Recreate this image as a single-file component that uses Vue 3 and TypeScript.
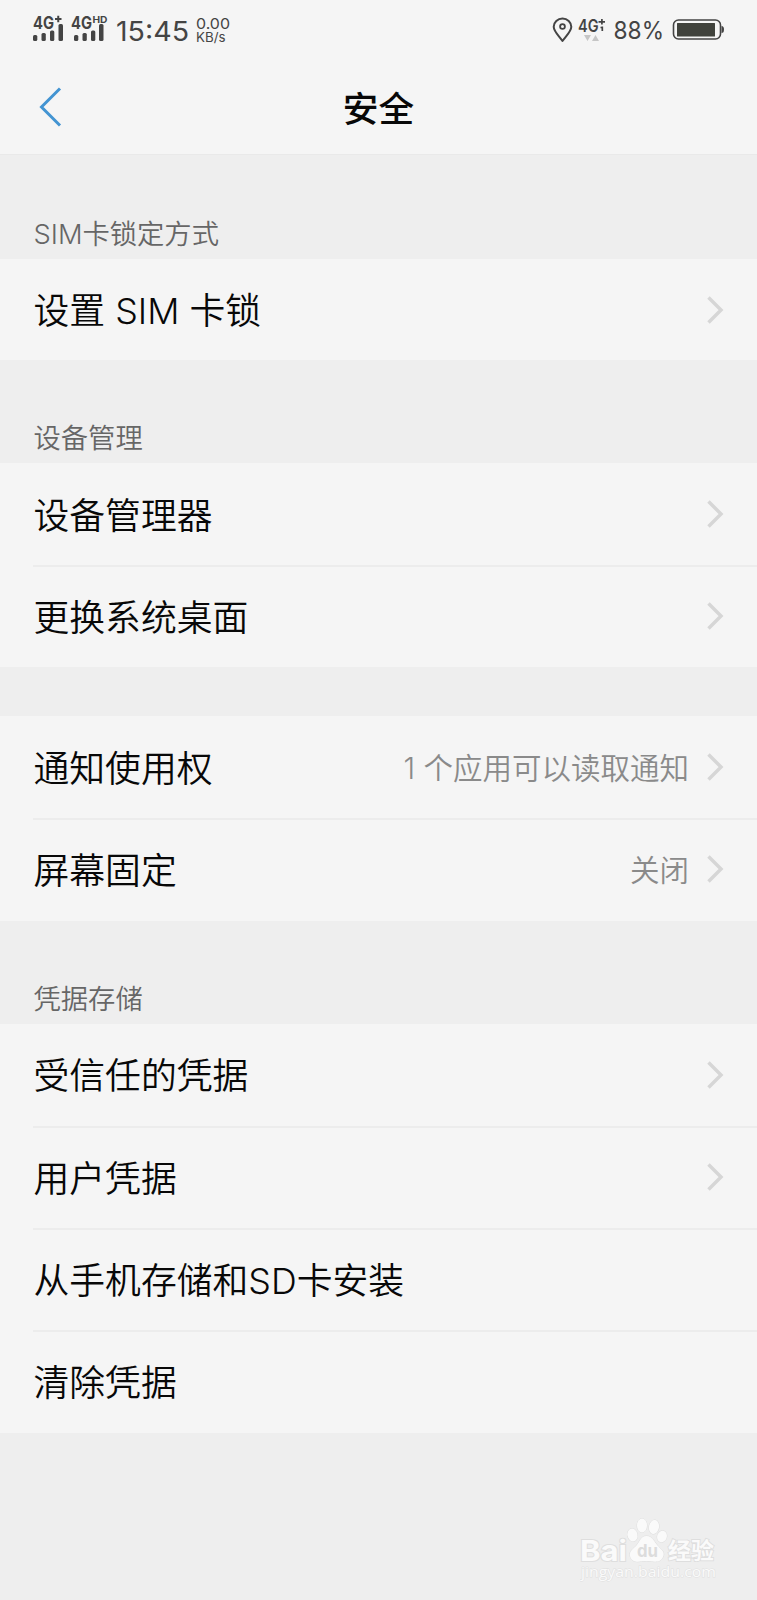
<script setup lang="ts">
interface Row {
  title: string
  value?: string
  arrow: boolean
}
interface Group {
  key: string
  label?: string
  rows: Row[]
}

const groups: Group[] = [
  { key: 'sim', label: 'SIM卡锁定方式', rows: [{ title: '设置 SIM 卡锁', arrow: true }] },
  {
    key: 'device',
    label: '设备管理',
    rows: [
      { title: '设备管理器', arrow: true },
      { title: '更换系统桌面', arrow: true },
    ],
  },
  {
    key: 'access',
    rows: [
      { title: '通知使用权', value: '1 个应用可以读取通知', arrow: true },
      { title: '屏幕固定', value: '关闭', arrow: true },
    ],
  },
  {
    key: 'credentials',
    label: '凭据存储',
    rows: [
      { title: '受信任的凭据', arrow: true },
      { title: '用户凭据', arrow: true },
      { title: '从手机存储和SD卡安装', arrow: false },
      { title: '清除凭据', arrow: false },
    ],
  },
]
</script>

<template>
  <main class="screen">
    <header class="top">
      <div class="status">
        <svg class="signals" width="78" height="60" viewBox="0 0 78 60">
          <g class="ink bold">
            <text x="0" y="28.500" font-size="17" textLength="21" lengthAdjust="spacingAndGlyphs">4G</text>
            <text x="38" y="28.500" font-size="17" textLength="21" lengthAdjust="spacingAndGlyphs">4G</text>
            <text x="59.500" y="23" font-size="9" textLength="15" lengthAdjust="spacingAndGlyphs">HD</text>
          </g>
          <path d="M22 19h6.500M25.250 15.800v6.400" class="line" stroke-width="2" />
          <g class="ink">
            <rect x="0" y="35" width="4.300" height="6" rx="1.500" />
            <rect x="8.500" y="33" width="4.300" height="8" rx="1.500" />
            <rect x="17" y="30.500" width="4.300" height="10.500" rx="1.500" />
            <rect x="25.500" y="24" width="4.500" height="17" rx="1.500" />
            <rect x="41" y="35" width="4.300" height="6" rx="1.500" />
            <rect x="49.500" y="33" width="4.300" height="8" rx="1.500" />
            <rect x="58" y="30.500" width="4.300" height="10.500" rx="1.500" />
            <rect x="66" y="24" width="4.500" height="17" rx="1.500" />
          </g>
        </svg>
        <svg class="clock" width="120" height="60" viewBox="0 0 120 60">
          <g class="ink">
            <text x="5" y="40.800" font-size="27" textLength="73" lengthAdjust="spacingAndGlyphs">15:45</text>
            <text x="85" y="29" font-size="15" textLength="34" lengthAdjust="spacingAndGlyphs">0.00</text>
            <text x="85" y="42" font-size="13" textLength="29.500" lengthAdjust="spacingAndGlyphs">KB/s</text>
          </g>
        </svg>
        <svg class="right" width="205" height="60" viewBox="0 0 205 60">
          <path d="M10.500 41C7 36 1.700 31.300 1.700 26.700a8.800 8.200 0 0 1 17.600 0C19.300 31.300 14 36 10.500 41Z" class="line" stroke-width="2" stroke-linejoin="round" />
          <circle cx="10.500" cy="26.500" r="2.400" class="line" stroke-width="1.800" />
          <text class="ink semi" x="26" y="31.500" font-size="17" textLength="20.500" lengthAdjust="spacingAndGlyphs">4G</text>
          <path d="M46.500 21.800h6.500M49.900 19v5.500M50.300 26.500v4.500M48.500 27.500h2" class="line" stroke-width="1.700" />
          <path d="M32 35h7l-3.500 6ZM40 41h7l-3.500-6Z" fill="#c6c6c6" />
          <text class="ink" x="61.500" y="39" font-size="24" textLength="50.500" lengthAdjust="spacingAndGlyphs">88%</text>
          <rect x="121.500" y="20" width="47" height="19" rx="5" class="line" stroke-width="1.600" />
          <rect x="125" y="23" width="38" height="13.500" rx=".5" fill="#40423c" />
          <path d="M169.500 26a2.500 3.500 0 0 1 0 7Z" class="ink" />
        </svg>
      </div>
      <div class="nav">
        <svg class="back" width="24" height="40" viewBox="0 0 24 40">
          <path d="M21 1.500L2.500 20L21 38.500" fill="none" stroke="#4394d2" stroke-width="3" />
        </svg>
        <h1>安全</h1>
      </div>
    </header>

    <section v-for="group in groups" :key="group.key" :class="['group', group.key]">
      <h2 v-if="group.label" class="label">{{ group.label }}</h2>
      <div v-else class="spacer"></div>
      <ul class="rows">
        <li v-for="row in group.rows" :key="row.title" class="row">
          <span class="title">{{ row.title }}</span>
          <span v-if="row.value" class="value">{{ row.value }}</span>
          <svg v-if="row.arrow" class="arrow" width="18" height="28" viewBox="0 0 18 28">
            <path d="M1.500 1.500L14 14L1.500 26.500" fill="none" stroke="#d6d6d6" stroke-width="3.500" />
          </svg>
        </li>
      </ul>
    </section>

    <svg class="mark" width="150" height="70" viewBox="0 0 150 70">
      <g fill="#fafafa" stroke="#dedede" stroke-width="1" paint-order="stroke">
        <text x="0" y="44.500" font-size="29" textLength="47" lengthAdjust="spacingAndGlyphs" class="bold" stroke-width="2">Bai</text>
        <ellipse cx="52.500" cy="19" rx="5" ry="6.500" transform="rotate(-12 52.500 19)" />
        <ellipse cx="62" cy="9.500" rx="5" ry="7" />
        <ellipse cx="74" cy="11" rx="5" ry="7" transform="rotate(10 74 11)" />
        <ellipse cx="82" cy="20.500" rx="4.800" ry="5.800" transform="rotate(20 82 20.500)" />
        <path d="M66.500 20c6 0 8 6.500 12 10.500 4 4 6.500 6 4.500 10.500-3 7-10 4-16.500 4s-13 3-16-3.500c-2-5 1-7.500 5-11 4-4 5-10.500 11-10.500Z" />
        <text x="57" y="41" font-size="18" textLength="21" lengthAdjust="spacingAndGlyphs" class="bold" fill="#dcdcdc" stroke="none">du</text>
        <text x="88" y="42.500" font-size="23" textLength="46" lengthAdjust="spacingAndGlyphs" class="bold" stroke-width="1.800">经验</text>
        <text x="1" y="61" font-size="15" textLength="135" lengthAdjust="spacingAndGlyphs" class="url" stroke="#e0e0e0">jingyan.baidu.com</text>
      </g>
    </svg>
  </main>
</template>

<style>
body {
  background: #eee;
}
</style>

<style scoped>
.screen {
  position: relative;
  width: 757px;
  height: 1600px;
  overflow: hidden;
  background: #eee;
  color: #080808;
  font-family: Inter, "Noto Sans CJK SC", sans-serif;
}
.top {
  height: 155px;
  background: #f5f5f5;
  border-bottom: 1px solid #e9e9e9;
  box-sizing: border-box;
}
.status {
  display: flex;
  height: 60px;
  padding-left: 33px;
}
.status svg {
  flex: none;
}
.right {
  margin-left: 321px;
}
.ink {
  fill: #444;
}
.line {
  fill: none;
  stroke: #444;
}
.bold {
  font-weight: 700;
}
.semi {
  font-weight: 600;
}
.url {
  font-family: "Open Sans", sans-serif;
}
.nav {
  display: grid;
  grid-template-columns: 78px 1fr 78px;
  align-items: center;
  height: 94px;
}
.back {
  margin: 0 0 0 39px;
}
h1 {
  margin: 0;
  padding-top: 3px;
  font-size: 35.700px;
  line-height: 50px;
  font-weight: 500;
  text-align: center;
}
.label {
  box-sizing: border-box;
  height: 103px;
  margin: 0;
  padding: 59px 0 0 33.500px;
  color: #666;
  font-size: 27.300px;
  line-height: 40px;
  font-weight: 350;
}
.sim .label {
  height: 104px;
  padding-top: 60px;
}
.spacer {
  height: 49px;
}
.rows {
  margin: 0;
  padding: 0;
  list-style: none;
  background: #f5f5f5;
}
.row {
  display: flex;
  align-items: center;
  box-sizing: border-box;
  height: 102px;
  margin-left: 33px;
  padding-right: 32px;
}
.access .row,
.credentials .row {
  height: 102.300px;
}
.sim .row {
  height: 101px;
}
.row + .row {
  box-shadow: inset 0 2px #ececec;
}
.title {
  flex: 1;
  padding: 3px 0 0 0.500px;
  font-size: 35.800px;
  line-height: 52px;
  font-weight: 350;
  white-space: pre;
}
.value {
  margin-right: 18px;
  padding-top: 2px;
  color: #8a8a8a;
  font-size: 29.500px;
  line-height: 44px;
  font-weight: 350;
}
.arrow {
  flex: none;
}
.mark {
  position: absolute;
  left: 580px;
  top: 1516px;
}
</style>
